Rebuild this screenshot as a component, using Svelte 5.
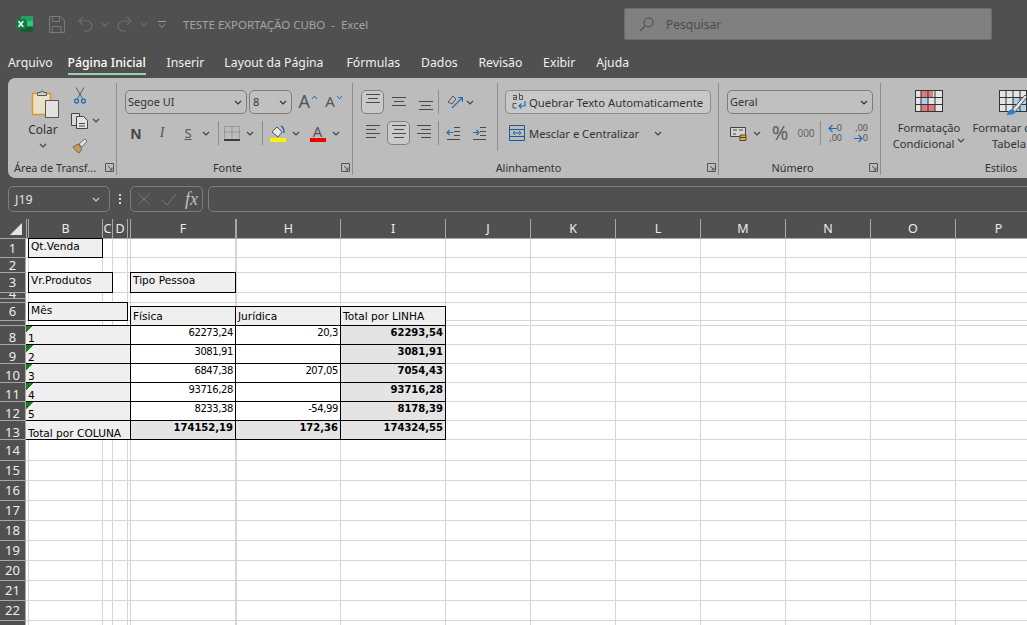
<script>
  const tabs = ['Arquivo','Página Inicial','Inserir','Layout da Página','Fórmulas','Dados','Revisão','Exibir','Ajuda'];
  const colW = [26,2,74,10,15,3,105,1,104,105,85,85,85,85,85,85,86];
  const colH = ['','','B','C','D','','F','','H','I','J','K','L','M','N','O','P'];
  const rowH = [19,19,15,20,6,4,4,14,5,19,19,19,19,19,19,21,20,20,20,20,20,20,20,20,10];
  const noLine = [4,6];
  const rowLabels = [
    ['1',1,2],['2',2,3],['3',3,4],['4',4,5],['',5,6],['6',6,8],['',8,9],
    ['8',9,10,1],['9',10,11,1],['10',11,12,1],['11',12,13,1],['12',13,14,1],['13',14,15,1],
    ['14',15,16],['15',16,17],['16',17,18],['17',18,19],['18',19,20],['19',20,21],['20',21,22],['21',22,23],['22',23,24],['',24,25]
  ];
  const data = [
    ['1','62273,24','20,3','62293,54'],
    ['2','3081,91','','3081,91'],
    ['3','6847,38','207,05','7054,43'],
    ['4','93716,28','','93716,28'],
    ['5','8233,38','-54,99','8178,39']
  ];
  const tracks = (a) => a.map((v) => v + 'px').join(' ');
  const area = (rs, cs, re, ce) => `grid-area:${rs + 1}/${cs + 1}/${re + 1}/${ce + 1}`;
</script>

{#snippet chev(c = '#444')}
  <svg width="8" height="5" viewBox="0 0 8 5"><path d="M1 1l3 3 3-3" fill="none" stroke={c} stroke-width="1.2"/></svg>
{/snippet}
{#snippet launcher()}
  <svg width="9" height="9" viewBox="0 0 9 9"><path d="M.5 8.500V.5h8v8z M3 3l4 4M7 4.500V7H4.500" fill="none" stroke="#555"/></svg>
{/snippet}
{#snippet lines(w1, w2, w3, w4, y = 3, gap = 4, anchor = 'c')}
  <svg width="16" height="18" viewBox="0 0 16 18">
    {#each [w1,w2,w3,w4] as w, i}
      {#if w}
        <path d="M{anchor === 'l' ? 1 : anchor === 'r' ? 15 - w : 8 - w / 2} {y + i * gap + .5}h{w}" stroke="#4a4a4a"/>
      {/if}
    {/each}
  </svg>
{/snippet}

<div class="app">
  <header class="title">
    <svg class="xl" width="17" height="16" viewBox="0 0 17 16">
      <rect x="5" y="0" width="12" height="5.500" fill="#21a366"/>
      <rect x="5" y="5" width="6" height="6" fill="#107c41"/>
      <rect x="11" y="5" width="6" height="6" fill="#33c481"/>
      <rect x="5" y="10.500" width="12" height="5.500" fill="#185c37"/>
      <rect x="0" y="3" width="10" height="10" fill="#107c41"/>
      <path d="M2.500 5.200l4.800 5.600M7.300 5.200l-4.800 5.600" stroke="#fff" stroke-width="1.500"/>
    </svg>
    <svg class="save" width="17" height="17" viewBox="0 0 17 17" fill="none" stroke="#7a7a7a">
      <path d="M1.500.5h11l4 4v12h-15z M4.500.5v5h7v-5 M4 16.500v-6h9v6"/>
    </svg>
    <svg class="undo" width="15" height="16" viewBox="0 0 15 16" fill="none" stroke="#6c6c6c" stroke-width="1.200">
      <path d="M5 1L1 5l4 4M1 5h8a5 5 0 0 1 0 10H6"/>
    </svg>
    <span class="tchev">{@render chev('#6c6c6c')}</span>
    <svg class="redo" width="15" height="16" viewBox="0 0 15 16" fill="none" stroke="#6c6c6c" stroke-width="1.200">
      <path d="M10 1l4 4-4 4M14 5H6a5 5 0 0 0 0 10h3"/>
    </svg>
    <span class="tchev">{@render chev('#6c6c6c')}</span>
    <svg class="custom" width="8" height="7" viewBox="0 0 8 7" fill="none" stroke="#9a9a9a">
      <path d="M0 .5h8M1 3.500l3 3 3-3"/>
    </svg>
    <span class="doc">TESTE EXPORTAÇÃO CUBO&nbsp; -&nbsp; Excel</span>
    <div class="search">
      <svg width="15" height="15" viewBox="0 0 15 15" fill="none" stroke="#4e4e4e" stroke-width="1.100"><circle cx="9.500" cy="5.500" r="4.500"/><path d="M6 9l-5 5"/></svg>
      <span>Pesquisar</span>
    </div>
  </header>

  <nav class="tabs">
    {#each tabs as t, i}
      <span class="tab t{i}" class:on={i === 1}>{t}</span>
    {/each}
  </nav>

  <section class="ribbon">
    <div class="group g-clip">
      <div class="body clip">
        <div class="paste">
          <svg class="pasteic" width="28" height="30" viewBox="0 0 28 30">
            <path d="M1.500 5.500h18v21h-18z" fill="#e9e0c8" stroke="#d8992c" stroke-width="1.500"/>
            <path d="M6.500 6.500v-2h3a1.500 1.500 0 0 1 3 0h3v3h-9z" fill="#cfcfcf" stroke="#5a5a5a"/>
            <path d="M14.500 12.500h13v17h-13z" fill="#e2e2e2" stroke="#555"/>
          </svg>
          <span class="colar">Colar</span>
          {@render chev()}
        </div>
        <div class="clipcol">
          <svg width="12" height="17" viewBox="0 0 12 17" fill="none">
            <path d="M2 .500l6.500 11M10 .500l-6.500 11" stroke="#5a5a5a"/>
            <circle cx="2.500" cy="14" r="2" stroke="#1f6fb5" stroke-width="1.300"/>
            <circle cx="9.500" cy="14" r="2" stroke="#1f6fb5" stroke-width="1.300"/>
          </svg>
          <svg width="17" height="16" viewBox="0 0 17 16" fill="none" stroke="#444">
            <path d="M.5.5h8v12h-8z" fill="#d8d8d8"/>
            <path d="M5.500 3.500h7l4 4v8h-11z" fill="#e4e4e4"/>
            <path d="M8 10.500h6M8 13h6"/>
          </svg>
          <svg width="16" height="16" viewBox="0 0 16 16">
            <path d="M1 9l5-3 4 5-3 4q-2-1-3-2.500z" fill="#cf9d47" stroke="#555" stroke-width=".8"/>
            <path d="M7 6l6-5 2 2-5 6z" fill="#e4e4e4" stroke="#555" stroke-width=".8"/>
          </svg>
        </div>
        <div class="clipchev">{@render chev()}</div>
      </div>
      <div class="label"><span>Área de Transf...</span><i>{@render launcher()}</i></div>
    </div>

    <div class="group g-font">
      <div class="body stack">
        <div class="f1">
          <div class="combo c-font"><span>Segoe UI</span> <b>{@render chev('#333')}</b></div>
          <div class="combo c-size"><span>8</span> <b>{@render chev('#333')}</b></div>
          <div class="aa"><span>A</span><svg width="7" height="5" viewBox="0 0 7 5"><path d="M1 4l2.500-3L6 4" fill="none" stroke="#1f6fb5"/></svg></div>
          <div class="aa sm"><span>A</span><svg width="7" height="5" viewBox="0 0 7 5"><path d="M1 1l2.500 3L6 1" fill="none" stroke="#1f6fb5"/></svg></div>
        </div>
        <div class="f2">
          <b class="bold">N</b>
          <i class="ital">I</i>
          <span class="und">S</span>
          <span class="cell">{@render chev()}</span>
          <span class="vsep"></span>
          <svg class="bord" width="16" height="15" viewBox="0 0 16 15" fill="none">
            <path d="M.5.5h15M.5.5v11M15.500.5v11M8 .5v11M.5 6h15" stroke="#777" stroke-dasharray="1 1"/>
            <path d="M0 14h16" stroke="#111" stroke-width="1.500"/>
          </svg>
          <span class="cell">{@render chev()}</span>
          <span class="vsep"></span>
          <svg class="fill" width="16" height="17" viewBox="0 0 16 17">
            <path d="M2 7l5-5 5 5-4 5z" fill="#e8e8e8" stroke="#555"/>
            <path d="M11 1q3 1 3 7" fill="none" stroke="#1f6fb5" stroke-width="1.500"/>
            <rect y="13" width="16" height="4" fill="#ffef00"/>
          </svg>
          <span class="cell">{@render chev()}</span>
          <span class="fcolor"><em>A</em><u></u></span>
          <span class="cell">{@render chev()}</span>
        </div>
      </div>
      <div class="label"><span>Fonte</span><i>{@render launcher()}</i></div>
    </div>

    <div class="group g-align">
      <div class="body flexrow">
        <div class="stack aleft">
          <div class="a1">
            <span class="btn on">{@render lines(14,10,14,0,1,4)}</span>
            <span class="cell">{@render lines(14,10,14,0,4,4)}</span>
            <span class="cell">{@render lines(14,10,14,0,8,4)}</span>
            <span class="vsep"></span>
            <span class="cell right">
              <svg width="16" height="16" viewBox="0 0 16 16" fill="none">
                <path d="M1 8l5-6 3 3-4 5z" stroke="#555"/>
                <path d="M5 14L15 4M11 3.500h4.500V8" stroke="#1f6fb5" stroke-width="1.200"/>
              </svg>
            </span>
            <span class="cell">{@render chev()}</span>
          </div>
          <div class="a2">
            <span class="cell">{@render lines(14,10,14,10,1,4,'l')}</span>
            <span class="btn on">{@render lines(14,10,14,10,1,4)}</span>
            <span class="cell">{@render lines(14,10,14,10,1,4,'r')}</span>
            <span class="vsep"></span>
            <span class="cell">
              <svg width="15" height="13" viewBox="0 0 15 13" fill="none"><path d="M1 12.500h13M8 .5h6M8 4.500h6M8 8.500h6" stroke="#4a4a4a"/><path d="M7 5.500H1M3.500 3L1 5.500 3.500 8" stroke="#1f6fb5" stroke-width="1.100"/></svg>
            </span>
            <span class="cell">
              <svg width="15" height="13" viewBox="0 0 15 13" fill="none"><path d="M1 12.500h13M8 .5h6M8 4.500h6M8 8.500h6" stroke="#4a4a4a"/><path d="M1 5.500h6M4.500 3L7 5.500 4.500 8" stroke="#1f6fb5" stroke-width="1.100"/></svg>
            </span>
          </div>
        </div>
        <div class="stack aright">
          <div class="wrap">
            <svg width="16" height="20" viewBox="0 0 16 20" fill="none">
              <path d="M1 3.500h3.500v4H1.500V5.500h3M7.500 1v6.500h3V3.500h-3M4.500 11.500H1v4.500h3.500" stroke="#444" stroke-width=".9"/>
              <path d="M13 9v5H7M9.500 11.500L7 14l2.500 2.500" stroke="#1f6fb5" stroke-width="1.200"/>
            </svg>
            <span>Quebrar Texto Automaticamente</span>
          </div>
          <div class="merge">
            <svg width="16" height="16" viewBox="0 0 16 16" fill="none">
              <path d="M.5.5h15v15H.5zM.5 4.500h15M.5 11.500h15" stroke="#1a5c9a"/>
              <path d="M4 8h8M6 6L4 8l2 2M10 6l2 2-2 2" stroke="#1f6fb5"/>
            </svg>
            <span>Mesclar e Centralizar</span>
            {@render chev()}
          </div>
        </div>
      </div>
      <div class="label"><span>Alinhamento</span><i>{@render launcher()}</i></div>
    </div>

    <div class="group g-num">
      <div class="body stack">
        <div class="combo c-num"><span>Geral</span> <b>{@render chev('#333')}</b></div>
        <div class="n2">
          <span class="cell">
            <svg width="17" height="15" viewBox="0 0 17 15" fill="none">
              <path d="M.5 1.500h15v9H.5z" fill="#d4d4d4" stroke="#444"/>
              <path d="M3 4h4M3 8h3M9 4h4" stroke="#444"/>
              <path d="M10 9h6v5.500h-6zM10 11.500h6" fill="#d8b25c" stroke="#5a4520"/>
            </svg>
          </span>
          <span class="cell">{@render chev()}</span>
          <span class="pct">%</span>
          <span class="mil">000</span>
          <span></span>
          <span class="vsep"></span>
          <span class="dec">
            <span class="dr"><svg width="9" height="9" viewBox="0 0 9 9" fill="none"><path d="M9 4.500H1M4.500 1L1 4.500 4.500 8" stroke="#1f6fb5" stroke-width="1.200"/></svg>0</span>
            <span class="dr">,00</span>
          </span>
          <span class="dec">
            <span class="dr">,00</span>
            <span class="dr"><svg width="9" height="9" viewBox="0 0 9 9" fill="none"><path d="M0 4.500h8M4.500 1L8 4.500 4.500 8" stroke="#1f6fb5" stroke-width="1.200"/></svg>0</span>
          </span>
        </div>
      </div>
      <div class="label"><span>Número</span><i>{@render launcher()}</i></div>
    </div>

    <div class="group g-style">
      <div class="body flexrow styles">
        <div class="st st1">
          <svg width="28" height="22" viewBox="0 0 28 22">
            <rect x=".5" y=".5" width="27" height="21" fill="#e4e4e4" stroke="#333"/>
            <rect x="6" y="1" width="12" height="6" fill="#e07a80"/>
            <rect x="6" y="8" width="7" height="6" fill="#a9d0ee"/>
            <rect x="6" y="15" width="14" height="6" fill="#e07a80"/>
            <path d="M6 0v22M13 0v22M20 0v22M0 7.500h28M0 14.500h28" stroke="#333"/>
          </svg>
          <span>Formatação</span>
          <span>Condicional {@render chev()}</span>
        </div>
        <div class="st st2">
          <svg width="28" height="26" viewBox="0 0 28 26">
            <rect x=".5" y=".5" width="27" height="21" fill="#e4e4e4" stroke="#333"/>
            <rect x="14" y="8" width="13" height="13" fill="#a9d0ee"/>
            <path d="M7 0v22M14 0v22M21 0v22M0 7.500h28M0 14.500h28" stroke="#333"/>
            <path d="M12 21L26 5l2 2-12 15z" fill="#e4e4e4" stroke="#555"/>
            <path d="M8 25q0-5 6-6l3 3q-2 3-9 3z" fill="#2d7fc1"/>
          </svg>
          <span class="shift">Formatar como</span>
          <span>Tabela</span>
        </div>
      </div>
      <div class="label"><span>Estilos</span></div>
    </div>
  </section>

  <div class="formula">
    <div class="namebox"><span>J19</span>{@render chev('#c8c8c8')}</div>
    <span class="dots"><u></u><u></u><u></u></span>
    <div class="fxbox">
      <svg width="14" height="14" viewBox="0 0 14 14"><path d="M1 1l12 12M13 1L1 13" stroke="#777" fill="none"/></svg>
      <svg width="16" height="13" viewBox="0 0 16 13"><path d="M1 7l5 5L15 1" stroke="#777" fill="none"/></svg>
      <em>fx</em>
    </div>
    <div class="input"></div>
  </div>

  <div class="sheet" style="grid-template-columns:{tracks(colW)};grid-template-rows:{tracks(rowH)}">
    {#each colW as _, c}
      {#if c > 0}<span class="vl" style={area(1, c, rowH.length, c + 1)}></span>{/if}
    {/each}
    {#each rowH as _, r}
      {#if r > 0 && !noLine.includes(r)}<span class="hl" style={area(r, 1, r + 1, colW.length)}></span>{/if}
    {/each}

    <div class="corner" style={area(0, 0, 1, 1)}>
      <svg width="14" height="14" viewBox="0 0 14 14"><path d="M13 1v12H1z" fill="#e4e4e4"/></svg>
    </div>
    {#each colW as _, c}
      {#if c > 0}<div class="ch" style={area(0, c, 1, c + 1)}>{colH[c]}</div>{/if}
    {/each}
    {#each rowLabels as [t, a, b, low]}
      <div class="rh" class:clip4={t === '4'} class:low={low} style={area(a, 0, b, 1)}>{t}</div>
    {/each}

    <div class="box hd mid" style={area(1, 2, 2, 3)}>Qt.Venda</div>
    <div class="box hd mid" style={area(3, 2, 4, 4)}>Vr.Produtos</div>
    <div class="box hd mid" style={area(3, 6, 4, 7)}>Tipo Pessoa</div>
    <div class="box hd mid" style={area(6, 2, 8, 5)}>Mês</div>
    <div class="box hd tight" style={area(7, 6, 9, 7)}>Física</div>
    <div class="box hd tight" style={area(7, 7, 9, 9)}>Jurídica</div>
    <div class="box hd tight" style={area(7, 9, 9, 10)}>Total por LINHA</div>

    {#each data as d, i}
      <div class="box lab flag" style={area(9 + i, 1, 10 + i, 6)}>{d[0]}</div>
      <div class="box val" style={area(9 + i, 6, 10 + i, 7)}>{d[1]}</div>
      <div class="box val" style={area(9 + i, 7, 10 + i, 9)}>{d[2]}</div>
      <div class="box val tot" style={area(9 + i, 9, 10 + i, 10)}>{d[3]}</div>
    {/each}
    <div class="box lab" style={area(14, 1, 15, 6)}>Total por COLUNA</div>
    <div class="box val tot" style={area(14, 6, 15, 7)}>174152,19</div>
    <div class="box val tot" style={area(14, 7, 15, 9)}>172,36</div>
    <div class="box val tot" style={area(14, 9, 15, 10)}>174324,55</div>
  </div>
</div>

<style>
  :global(body) { margin: 0; background: #fff; overflow: hidden; }
  .app { width: 1027px; height: 625px; overflow: hidden; background: #505050; font-family: "Noto Sans", sans-serif; color: #333; }
  svg { display: block; flex: none; }

  .title { height: 48px; display: flex; align-items: center; color: #a8a8a8; }
  .xl { margin-left: 16px; }
  .save { margin-left: 15px; }
  .undo { margin-left: 13px; }
  .redo { margin-left: 8px; }
  .tchev { margin-left: 8px; }
  .custom { margin-left: 10px; }
  .doc { margin-left: 17px; font-size: 11.5px; width: 441px; flex: none; white-space: nowrap; color: #a4a4a4; }
  .search { box-sizing: border-box; width: 368px; height: 32px; background: #808080; border: 1px solid #6e6e6e; border-radius: 2px; display: flex; align-items: center; gap: 12px; padding-left: 14px; font-size: 12px; color: #4c4c4c; }

  .tabs { height: 30px; display: flex; align-items: flex-start; padding-left: 8px; color: #f0f0f0; font-size: 12.25px; }
  .tab { white-space: nowrap; line-height: 18px; margin-top: 6px; margin-right: 20.8px; }
  .tab.t0 { margin-right: 15px; }
  .tab.t2 { margin-right: 20px; }
  .tab.t3 { margin-right: 23px; }
  .tab.on { font-weight: 500; color: #fff; padding-bottom: 1px; border-bottom: 2px solid #9ad3ae; }

  .ribbon { margin-left: 8px; height: 100px; background: #bcbcbc; border-radius: 7px 0 0 7px; display: flex; box-sizing: border-box; padding: 5px 0 3px; font-size: 12px; overflow: hidden; }
  .group { box-sizing: border-box; flex: none; border-right: 1px solid #8f8f8f; display: flex; flex-direction: column; height: 92px; }
  .g-clip { width: 109px; }
  .g-font { width: 236px; }
  .g-align { width: 366px; }
  .g-num { width: 162px; }
  .g-style { width: 240px; border: 0; }
  .body { height: 68px; }
  .stack { display: flex; flex-direction: column; gap: 7px; padding-top: 7px; box-sizing: border-box; }
  .flexrow { display: flex; }
  .label { margin-top: auto; height: 16px; display: flex; align-items: center; font-size: 10.9px; color: #333; }
  .label span { flex: 1; text-align: center; white-space: nowrap; }
  .label i { width: 14px; flex: none; display: flex; justify-content: center; }

  .clip { display: grid; grid-template-columns: 56px 14px 22px; padding-left: 7px; height: 75px; }
  .paste { display: flex; flex-direction: column; align-items: center; padding-top: 5px; }
  .pasteic { margin-left: 4px; }
  .colar { margin-top: 2px; line-height: 20px; font-size: 12px; margin-bottom: 3px; }
  .clipcol { display: grid; grid-template-rows: repeat(3, 25px); justify-items: center; align-items: center; }
  .clipchev { height: 75px; display: flex; align-items: center; justify-content: center; }

  .f1 { display: flex; padding-left: 8px; height: 24px; }
  .combo { box-sizing: border-box; height: 24px; background: #c0c0c0; border: 1px solid #7c7c7c; border-radius: 5px; display: flex; align-items: center; padding-left: 2px; color: #333; font-size: 11px; }
  .combo span { margin-top: -2px; }
  .combo b { margin-left: auto; margin-right: 4px; }
  .c-font { width: 123px; }
  .c-size { width: 43px; margin-left: 2px; padding-left: 3px; }
  .c-num { width: 146px; margin-left: 8px; flex: none; }
  .aa { display: flex; align-items: flex-start; width: 27px; margin-left: 7px; font-size: 18px; line-height: 22px; color: #555; }
  .aa svg { margin-top: 5px; margin-left: 1px; }
  .aa.sm { font-size: 15px; margin-left: 0; }

  .f2 { display: grid; grid-template-columns: 26px 26px 26px 10px 14px 14px 22px 2px 29px 8px 32px 8px; padding-left: 6px; align-items: center; height: 24px; justify-items: center; font-size: 14px; }
  .f2 .bold { color: #444; font-family: "Liberation Sans"; font-size: 15px; }
  .f2 .ital { font-family: "Liberation Serif"; color: #555; }
  .f2 .und { text-decoration: underline; color: #555; font-size: 13px; }
  .cell { display: flex; align-items: center; justify-content: center; height: 24px; }
  .vsep { width: 1px; height: 24px; background: #8c8c8c; }
  .fcolor { display: flex; flex-direction: column; align-items: center; width: 16px; margin-left: 3px; }
  .fcolor em { font-style: normal; font-size: 15px; line-height: 14px; color: #555; }
  .fcolor u { display: block; width: 16px; height: 4px; background: #ee0000; }

  .aleft { width: 145px; flex: none; border-right: 1px solid #8f8f8f; }
  .a1, .a2 { display: grid; align-items: center; height: 24px; justify-items: center; }
  .a1 { grid-template-columns: 23px 29px 25px 1px 24px 14px; padding-left: 8px; }
  .a2 { grid-template-columns: 28px 23px 28px 1px 28px 24px; padding-left: 6px; }
  .btn { box-sizing: border-box; width: 23px; height: 24px; display: flex; align-items: center; justify-content: center; }
  .btn.on { background: #cacaca; border: 1px solid #808080; border-radius: 5px; }
  .right { justify-self: end; }
  .aright { padding-left: 7px; }
  .wrap { box-sizing: border-box; width: 206px; height: 24px; background: #c8c8c8; border: 1px solid #8c8c8c; border-radius: 5px; display: flex; align-items: center; gap: 1px; padding-left: 6px; font-size: 11.3px; white-space: nowrap; }
  .merge { display: flex; align-items: center; height: 24px; padding-left: 4px; font-size: 11.2px; gap: 4px; white-space: nowrap; }
  .merge span { margin-right: 11px; }

  .n2 { display: grid; grid-template-columns: 27px 10px 36px 16px 6px 1px 26px 26px; padding-left: 6px; height: 24px; align-items: center; justify-items: center; }
  .pct { font-size: 20px; color: #5c5c5c; line-height: 24px; }
  .mil { font-size: 10px; color: #666; }
  .dec { display: flex; flex-direction: column; align-items: flex-end; width: 16px; font-size: 9px; line-height: 10px; color: #555; }
  .dr { display: flex; align-items: center; }

  .styles { padding-top: 7px; box-sizing: border-box; padding-left: 4px; }
  .st { display: flex; flex-direction: column; align-items: center; flex: none; white-space: nowrap; font-size: 11.2px; line-height: 16px; }
  .st svg { margin-bottom: 8px; }
  .st span { display: flex; align-items: center; gap: 3px; }
  .st1 { width: 88px; }
  .st2 { width: 72px; }
  .st2 svg { margin-bottom: 4px; margin-left: 8px; }
  .st2 .shift { margin-left: 8px; }

  .formula { height: 41px; box-sizing: border-box; padding-top: 8px; display: flex; align-items: flex-start; color: #ddd; }
  .namebox { box-sizing: border-box; margin-left: 8px; width: 102px; height: 26px; border: 1px solid #7e7e7e; border-radius: 5px; display: flex; align-items: center; justify-content: space-between; padding: 0 9px 0 6px; font-size: 12.5px; color: #e0e0e0; }
  .dots { width: 20px; height: 26px; display: flex; flex-direction: column; gap: 2px; align-items: center; justify-content: center; }
  .dots u { display: block; width: 2px; height: 2px; background: #d8d8d8; }
  .fxbox { box-sizing: border-box; width: 73px; height: 26px; border: 1px solid #7e7e7e; border-radius: 5px; display: flex; align-items: center; gap: 10px; padding-left: 6px; }
  .fxbox em { font-family: "Liberation Serif", serif; font-size: 18px; color: #c0c0c0; margin-left: -2px; }
  .input { box-sizing: border-box; margin-left: 5px; flex: 1; height: 26px; margin-right: -10px; border: 1px solid #7e7e7e; border-radius: 5px; }

  .sheet { display: grid; background: #fff; width: 1027px; overflow: hidden; font-family: "DejaVu Sans", sans-serif; font-size: 10.6px; color: #000; }
  .vl { border-right: 1px solid #d6d6d6; margin-right: -1px; }
  .hl { border-bottom: 1px solid #d6d6d6; margin-bottom: -1px; }
  .corner { background: #505050; display: flex; align-items: center; justify-content: flex-end; padding-right: 3px; border-bottom: 1px solid #a8a8a8; margin-bottom: -1px; }
  .ch { background: #505050; color: #ececec; font-family: "Noto Sans", sans-serif; font-size: 12.5px; line-height: 19px; text-align: center; box-sizing: border-box; border-left: 1px solid #a8a8a8; border-bottom: 1px solid #a8a8a8; margin-bottom: -1px; overflow: hidden; }
  .rh { background: #505050; color: #ececec; font-family: "Noto Sans", sans-serif; font-size: 13px; line-height: 13px; text-align: center; box-sizing: border-box; border-top: 1px solid #a8a8a8; border-right: 1px solid #a8a8a8; overflow: hidden; display: flex; align-items: center; justify-content: center; }
  .rh.clip4 { align-items: flex-end; line-height: 10px; }
  .rh.low { padding-top: 5px; }
  .box { box-sizing: border-box; margin: 0 -1px -1px 0; border: 1px solid #000; white-space: nowrap; overflow: hidden; padding: 0 2px; }
  .hd { background: #efefef; line-height: 15px; }
  .mid { padding-left: 2px; }
  .tight { display: flex; align-items: flex-end; line-height: 17px; }
  .lab { background: #efefef; display: flex; align-items: flex-end; padding-left: 2px; line-height: 11px; border-left: 0; }
  .flag { background-image: linear-gradient(135deg, #1c7c1c 50%, transparent 50%); background-size: 7px 7px; background-repeat: no-repeat; }
  .val { background: #fff; text-align: right; line-height: 13px; font-size: 10px; letter-spacing: -.4px; }
  .tot { background: #e4e4e4; font-weight: 700; letter-spacing: 0; }
</style>
